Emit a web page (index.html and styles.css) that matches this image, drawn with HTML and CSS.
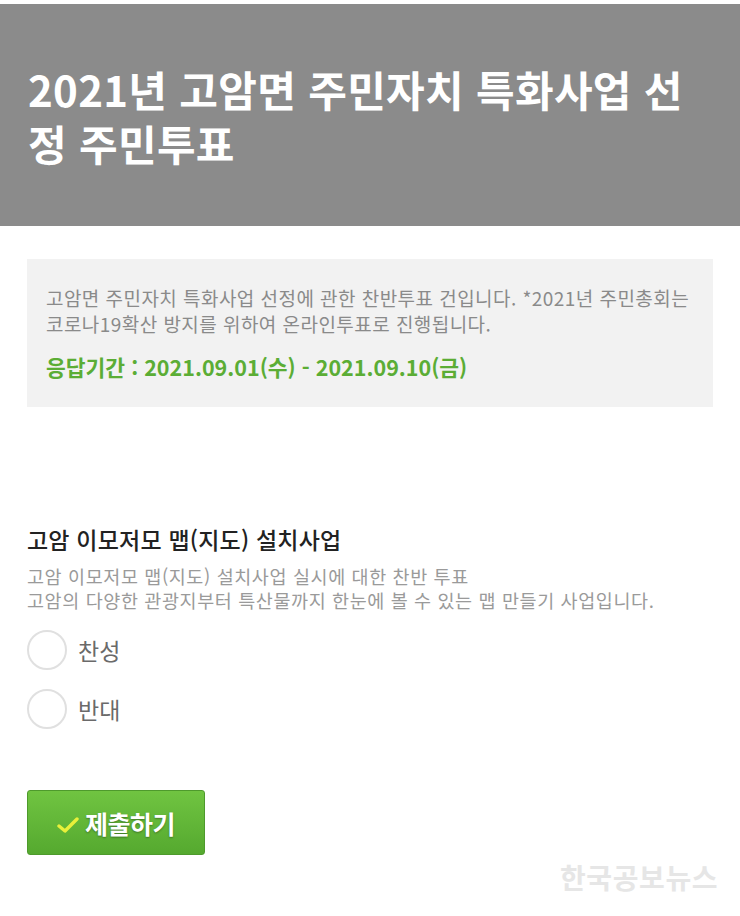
FILE: index.html
```html
<!DOCTYPE html>
<html lang="ko">
<head>
<meta charset="utf-8">
<title>2021년 고암면 주민자치 특화사업 선정 주민투표</title>
<link rel="stylesheet" href="styles.css">
</head>
<body>
<div class="page">
  <header class="hero">
    <h1 class="hero-title">2021년 고암면 주민자치 특화사업 선정 주민투표</h1>
  </header>

  <section class="info">
    <p class="info-text">고암면 주민자치 특화사업 선정에 관한 찬반투표 건입니다. *2021년 주민총회는 코로나19확산 방지를 위하여 온라인투표로 진행됩니다.</p>
    <p class="info-period">응답기간 : 2021.09.01(수) - 2021.09.10(금)</p>
  </section>

  <section class="question">
    <h2 class="q-title">고암 이모저모 맵(지도) 설치사업</h2>
    <div class="q-desc">
      <p class="q-line">고암 이모저모 맵(지도) 설치사업 실시에 대한 찬반 투표</p>
      <p class="q-line">고암의 다양한 관광지부터 특산물까지 한눈에 볼 수 있는 맵 만들기 사업입니다.</p>
    </div>
    <div class="options">
      <label class="option"><span class="radio"></span><span class="option-label">찬성</span></label>
      <label class="option"><span class="radio"></span><span class="option-label">반대</span></label>
    </div>
  </section>

  <div class="actions">
    <button class="submit" type="button">
      <svg class="check" width="22" height="18" viewBox="0 0 22 18"><path d="M2 10 L8 15 L20 3" fill="none" stroke="#e8f03a" stroke-width="3.4" stroke-linecap="round" stroke-linejoin="round"/></svg>
      <span>제출하기</span>
    </button>
  </div>

  <div class="watermark">한국공보뉴스</div>
</div>
</body>
</html>
```

FILE: styles.css
```css
html, body {
  margin: 0;
  padding: 0;
  background: #ffffff;
}

.page {
  position: relative;
  width: 740px;
  height: 916px;
  padding-top: 4px;
  box-sizing: border-box;
  font-family: "Noto Sans CJK KR", "Noto Sans", sans-serif;
  overflow: hidden;
}

.hero {
  background: #8b8b8b;
  height: 222px;
  box-sizing: border-box;
  padding: 58px 26px 0 28px;
}

.hero-title {
  margin: 0;
  color: #ffffff;
  font-size: 42px;
  font-weight: 700;
  line-height: 54px;
  letter-spacing: 0.3px;
}

.info {
  margin: 33px 27px 0;
  background: #f2f2f2;
  padding: 26px 19px 27px;
}

.info-text {
  margin: 0;
  color: #8a8a8a;
  font-size: 19px;
  line-height: 26px;
  font-weight: 400;
  letter-spacing: 0.45px;
}

.info-period {
  margin: 17px 0 0;
  color: #5bad35;
  font-size: 21.5px;
  line-height: 26px;
  font-weight: 700;
  letter-spacing: 0;
}

.question {
  margin: 118px 27px 0;
}

.q-title {
  margin: 0;
  color: #222222;
  font-size: 23px;
  line-height: 28px;
  font-weight: 500;
  letter-spacing: 0.2px;
}

.q-desc {
  margin-top: 11px;
  display: flex;
  flex-direction: column;
}

.q-line {
  margin: 0;
  color: #9a9a9a;
  font-size: 18.5px;
  line-height: 24px;
  letter-spacing: 0.6px;
}

.options {
  margin-top: 18px;
  display: flex;
  flex-direction: column;
  gap: 19px;
}

.option {
  display: flex;
  align-items: center;
  gap: 11px;
  height: 40px;
}

.radio {
  width: 36px;
  height: 36px;
  border: 2px solid #e0e0e0;
  border-radius: 50%;
  background: #ffffff;
}

.option-label {
  color: #6a6a6a;
  font-size: 23px;
  line-height: 30px;
}

.actions {
  margin: 61px 27px 0;
}

.submit {
  width: 178px;
  height: 65px;
  border: 1px solid #4e9a2c;
  border-radius: 3px;
  background: linear-gradient(#70c441, #55a92f);
  display: flex;
  align-items: center;
  justify-content: center;
  gap: 6px;
  padding: 0;
  font-family: inherit;
  color: #ffffff;
  font-size: 25px;
  font-weight: 700;
  letter-spacing: -0.5px;
  text-shadow: 0 1px 2px rgba(0,0,0,0.35);
  cursor: pointer;
}

.check {
  margin-top: 4px;
}

.watermark {
  position: absolute;
  left: 560px;
  top: 857px;
  color: #e6e6e6;
  font-size: 28px;
  font-weight: 700;
  letter-spacing: 0.6px;
}
```
